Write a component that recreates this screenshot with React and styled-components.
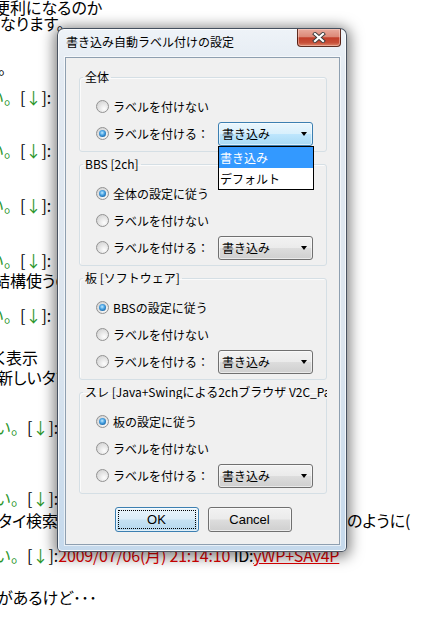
import React from "react";
import styled, { createGlobalStyle } from "styled-components";

const GlobalStyle = createGlobalStyle`
  html, body {
    margin: 0;
    padding: 0;
    background: #fff;
  }
  body {
    font-family: "Noto Sans CJK JP", "Noto Sans", sans-serif;
  }
`;

const Page = styled.div`
  position: relative;
  width: 421px;
  height: 621px;
  overflow: hidden;
  background: #fff;
  color: #000;
  font-family: "Noto Sans CJK JP", sans-serif;
  font-size: 16px;
`;

const Thread = styled.div`
  display: flex;
  flex-direction: column;
  margin-top: -1px;
`;

const Line = styled.div`
  height: 16px;
  line-height: 16px;
  white-space: nowrap;
  margin-top: ${(p) => p.$gap || 0}px;
  margin-left: ${(p) => p.$shift || 0}px;
  font-feature-settings: ${(p) => (p.$mono ? "normal" : '"palt"')};
`;

const SplitLine = styled(Line)`
  display: grid;
  grid-template-columns: ${(p) => p.$col}px auto;
`;

const Green = styled.span`
  color: #2b962b;
`;

const Red = styled.span`
  color: #e00000;
  letter-spacing: -0.2px;
`;

const IdLabel = styled.span`
  letter-spacing: -0.2px;
`;

const IdLink = styled(Red)`
  text-decoration: underline;
`;

// dialog
const Window = styled.div`
  position: absolute;
  left: 57px;
  top: 28px;
  width: 290px;
  height: 524px;
  box-sizing: border-box;
  display: flex;
  flex-direction: column;
  padding: 0 6px 6px 7px;
  border: 1px solid rgba(35, 45, 60, 0.8);
  border-radius: 7px 7px 5px 5px;
  background: linear-gradient(180deg, #eef3f8 0%, #e3eaf2 8%, #dce5ee 60%, #c5d9ec 100%);
  box-shadow: 0 2px 14px 3px rgba(0, 0, 0, 0.5),
    inset 0 0 0 1px rgba(255, 255, 255, 0.75);
  font-family: "Noto Sans CJK JP", sans-serif;
  font-feature-settings: normal;
  font-size: 12px;
  z-index: 2;
`;

const TitleBar = styled.div`
  flex: none;
  height: 28px;
  display: flex;
  align-items: flex-start;
  justify-content: space-between;
`;

const Title = styled.div`
  padding: 6px 0 0 1px;
  font-size: 12px;
  line-height: 14px;
  color: #000;
  white-space: nowrap;
`;

const CloseButton = styled.div`
  width: 44px;
  height: 18px;
  box-sizing: border-box;
  margin-right: -1px;
  display: flex;
  align-items: center;
  justify-content: center;
  border: 1px solid rgba(70, 25, 15, 0.85);
  border-top: none;
  border-radius: 0 0 4px 4px;
  background: linear-gradient(180deg, #e9ab9d 0%, #dc8978 45%, #c23e29 52%, #c74f38 80%, #dc866a 100%);
  box-shadow: inset 0 0 0 1px rgba(255, 220, 210, 0.45);
`;

const Client = styled.div`
  flex: 1;
  display: flex;
  flex-direction: column;
  gap: 5px;
  padding: 12px 12px 0 13px;
  border: 1px solid #8e9fb0;
  background: #f0f0f0;
  box-shadow: 0 0 0 1px rgba(255, 255, 255, 0.6);
`;

const Group = styled.fieldset`
  margin: 0;
  min-width: 0;
  padding: 0 4px 4px 3px;
  border: 1px solid #d5dfe5;
  border-radius: 3px;
  box-shadow: inset 1px 1px 0 #fbfbfb;
`;

const Legend = styled.legend`
  padding: 0 2px;
  font-size: 12px;
  line-height: 14px;
  max-width: 244px;
  box-sizing: border-box;
  overflow: hidden;
  white-space: nowrap;
  color: #000;
`;

const Rows = styled.div`
  display: flex;
  flex-direction: column;
  padding: 9px 0 0 13px;
`;

const Row = styled.div`
  height: 27px;
  display: flex;
  align-items: center;
  white-space: nowrap;
`;

const Radio = styled.span`
  position: relative;
  flex: none;
  width: 13px;
  height: 13px;
  box-sizing: border-box;
  margin-right: 4px;
  border-radius: 50%;
  border: 1px solid #929292;
  background: radial-gradient(circle at 65% 70%, #fdfdfd 0%, #e6e6e6 45%, #cbcbcb 100%);
  &::after {
    content: "";
    display: ${(p) => (p.$on ? "block" : "none")};
    position: absolute;
    left: 2px;
    top: 2px;
    width: 7px;
    height: 7px;
    border-radius: 50%;
    background: radial-gradient(circle at 45% 40%, #c4ebff 0%, #4aa3e3 40%, #0f5a9a 85%, #0a3f6e 100%);
  }
`;

const Combo = styled.div`
  position: relative;
  flex: none;
  margin-left: 9px;
  width: 95px;
  height: 24px;
  box-sizing: border-box;
  display: flex;
  align-items: center;
  justify-content: space-between;
  padding: 0 5px 0 3px;
  border-radius: 3px;
  border: 1px solid ${(p) => (p.$open ? "#3c7fb1" : "#707070")};
  background: ${(p) =>
    p.$open
      ? "linear-gradient(180deg, #eaf6fd 0%, #d9f0fc 48%, #bee6fd 50%, #a7d9f5 100%)"
      : "linear-gradient(180deg, #f2f2f2 0%, #ebebeb 48%, #dddddd 50%, #cfcfcf 100%)"};
  box-shadow: inset 0 0 0 1px rgba(255, 255, 255, 0.55);
`;

const ComboText = styled.span`
  font-size: 12px;
  line-height: 14px;
`;

const Arrow = styled.span`
  width: 0;
  height: 0;
  border-left: 3.5px solid transparent;
  border-right: 3.5px solid transparent;
  border-top: 4px solid #000;
`;

const Popup = styled.div`
  position: absolute;
  left: -1px;
  top: 23px;
  width: 96px;
  box-sizing: border-box;
  border: 1px solid #000;
  background: #fff;
  z-index: 5;
`;

const PopupItem = styled.div`
  height: 21px;
  line-height: 21px;
  padding-left: 1px;
  font-size: 12px;
  background: ${(p) => (p.$active ? "#3399ff" : "#fff")};
  color: ${(p) => (p.$active ? "#fff" : "#000")};
`;

const ButtonRow = styled.div`
  display: flex;
  justify-content: center;
  gap: 9px;
  margin-top: 8px;
`;

const Button = styled.div`
  width: 84px;
  height: 25px;
  box-sizing: border-box;
  display: flex;
  align-items: center;
  justify-content: center;
  font-family: "Liberation Sans", Arial, sans-serif;
  font-size: 13px;
  color: #000;
  border-radius: 3px;
  border: 1px solid ${(p) => (p.$primary ? "#3c7fb1" : "#707070")};
  background: ${(p) =>
    p.$primary
      ? "linear-gradient(180deg, #e9f4fb 0%, #dcedf8 48%, #c6e2f3 52%, #b5d8ee 100%)"
      : "linear-gradient(180deg, #f2f2f2 0%, #ebebeb 48%, #dddddd 52%, #cfcfcf 100%)"};
  box-shadow: inset 0 0 0 1px rgba(255, 255, 255, 0.6);
  outline: ${(p) => (p.$primary ? "1px dotted #000" : "none")};
  outline-offset: -4px;
`;

function CloseGlyph() {
  return (
    <svg width="14" height="11" viewBox="0 0 14 11">
      <path d="M3 2 L11 9 M11 2 L3 9" stroke="#3d3d3d" strokeWidth="4" strokeLinecap="square" fill="none" />
      <path d="M3 2 L11 9 M11 2 L3 9" stroke="#fff" strokeWidth="2.2" strokeLinecap="square" fill="none" />
    </svg>
  );
}

function NameLine({ gap, shift }) {
  return (
    <Line $gap={gap} $shift={shift} $mono>
      <Green>い。</Green>[<Green>↓</Green>]:
    </Line>
  );
}

function LabelGroup({ title, first }) {
  return (
    <Group>
      <Legend>{title}</Legend>
      <Rows>
        <Row>
          <Radio $on />
          {first}
        </Row>
        <Row>
          <Radio />
          ラベルを付けない
        </Row>
        <Row>
          <Radio />
          ラベルを付ける：
          <Combo>
            <ComboText>書き込み</ComboText>
            <Arrow />
          </Combo>
        </Row>
      </Rows>
    </Group>
  );
}

export default function App() {
  return (
    <>
      <GlobalStyle />
      <Page>
        <Thread>
          <Line $shift={-6}>便利になるのか</Line>
          <Line>なります。</Line>
          <Line $gap={28} $shift={-2}>。</Line>
          <NameLine gap={14} shift={-12} />
          <NameLine gap={37} shift={-12} />
          <NameLine gap={39} shift={-12} />
          <NameLine gap={39} shift={-12} />
          <Line $gap={4} $shift={-6}>結構使うのですが</Line>
          <NameLine gap={19} shift={-12} />
          <Line $gap={26} $shift={-5}>く表示</Line>
          <Line $gap={4} $shift={-3}>新しいタブで開く</Line>
          <NameLine gap={34} shift={-5} />
          <NameLine gap={55} shift={-5} />
          <SplitLine $gap={6} $shift={-2} $col={349}>
            <span>タイ検索の設定</span>
            <span>のように(</span>
          </SplitLine>
          <Line $gap={19} $shift={-5} $mono>
            <Green>い。</Green>[<Green>↓</Green>]:<Red>2009/07/06(月) 21:14:10</Red>{" "}
            <IdLabel>ID:</IdLabel>
            <IdLink>yWP+SAv4P</IdLink>
          </Line>
          <Line $gap={26} $shift={-3}>があるけど･･･</Line>
        </Thread>

        <Window>
          <TitleBar>
            <Title>書き込み自動ラベル付けの設定</Title>
            <CloseButton>
              <CloseGlyph />
            </CloseButton>
          </TitleBar>
          <Client>
            <Group>
              <Legend>全体</Legend>
              <Rows>
                <Row>
                  <Radio />
                  ラベルを付けない
                </Row>
                <Row>
                  <Radio $on />
                  ラベルを付ける：
                  <Combo $open>
                    <ComboText>書き込み</ComboText>
                    <Arrow />
                    <Popup>
                      <PopupItem $active>書き込み</PopupItem>
                      <PopupItem>デフォルト</PopupItem>
                    </Popup>
                  </Combo>
                </Row>
              </Rows>
            </Group>
            <LabelGroup title="BBS [2ch]" first="全体の設定に従う" />
            <LabelGroup title="板 [ソフトウェア]" first="BBSの設定に従う" />
            <LabelGroup title="スレ [Java+Swingによる2chブラウザ V2C_Part7]" first="板の設定に従う" />
            <ButtonRow>
              <Button $primary>OK</Button>
              <Button>Cancel</Button>
            </ButtonRow>
          </Client>
        </Window>
      </Page>
    </>
  );
}
